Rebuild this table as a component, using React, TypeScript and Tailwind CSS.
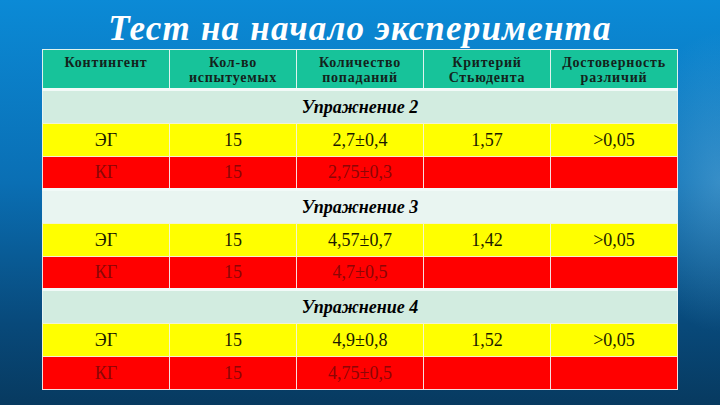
const HEAD = [["Контингент"], ["Кол-во", "испытуемых"], ["Количество", "попаданий"], ["Критерий", "Стьюдента"], ["Достоверность", "различий"]];

const BLOCKS = [
  { name: "Упражнение 2", shade: "bg-[#d2ece0]", eg: ["ЭГ", "15", "2,7±0,4", "1,57", ">0,05"], kg: ["КГ", "15", "2,75±0,3", "", ""] },
  { name: "Упражнение 3", shade: "bg-[#e9f5f1]", eg: ["ЭГ", "15", "4,57±0,7", "1,42", ">0,05"], kg: ["КГ", "15", "4,7±0,5", "", ""] },
  { name: "Упражнение 4", shade: "bg-[#d2ece0]", eg: ["ЭГ", "15", "4,9±0,8", "1,52", ">0,05"], kg: ["КГ", "15", "4,75±0,5", "", ""] },
];

export default function App() {
  return (
    <div className="w-[720px] h-[405px] overflow-hidden bg-[radial-gradient(ellipse_90px_150px_at_100%_45%,rgba(140,200,235,0.35),transparent),linear-gradient(180deg,#0b8ad6_0%,#0a6fb4_45%,#08497a_80%,#073a60_100%)] flex flex-col items-center font-['Liberation_Serif','DejaVu_Serif',serif]">
      <h1 className="mt-[9px] h-[39px] text-[35px] leading-[39px] font-bold italic text-white tracking-[1.2px]">
        Тест на начало эксперимента
      </h1>
      <table className="mt-[1px] w-[636px] table-fixed border-collapse border border-[#e8f4f4]">
        <thead>
          <tr className="h-[40px] bg-[#17c39a]">
            {HEAD.map((h) => (
              <th key={h[0]} className="border border-[#dff3ee] px-1 align-top pt-[5px] text-[14px] leading-[15px] font-bold text-[#13231c] tracking-[0.8px]">
                {h.map((l) => (
                  <div key={l}>{l}</div>
                ))}
              </th>
            ))}
          </tr>
        </thead>
        <tbody>
          {BLOCKS.map((b) => (
            <>
              <tr key={b.name} className={`h-[34px] ${b.shade}`}>
                <td colSpan={5} className="border-t-[3px] border-[#f2faf8] text-center text-[18px] font-bold italic text-black">
                  {b.name}
                </td>
              </tr>
              <tr className="h-[33px] bg-[#ffff00]">
                {b.eg.map((c, i) => (
                  <td key={i} className="border border-[#f4f4d0] text-center text-[18px] text-[#1a1a00]">
                    {c}
                  </td>
                ))}
              </tr>
              <tr className="h-[33px] bg-[#ff0000]">
                {b.kg.map((c, i) => (
                  <td key={i} className="border border-[#f6dede] text-center text-[18px] text-[#8c0606]">
                    {c}
                  </td>
                ))}
              </tr>
            </>
          ))}
        </tbody>
      </table>
    </div>
  );
}
